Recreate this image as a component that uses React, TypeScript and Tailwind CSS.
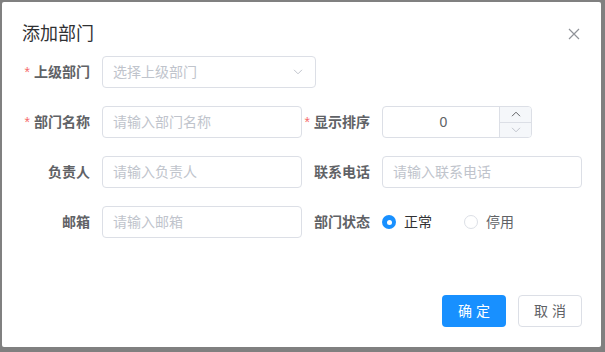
import React from "react";

const font = "font-['Liberation_Sans','Noto_Sans_CJK_SC',sans-serif]";

function Label({ text, required }: { text: string; required?: boolean }) {
  return (
    <label className="w-[80px] shrink-0 pr-[12px] flex items-center justify-end h-8 text-[14px] font-bold text-[#606266]">
      {required && <span className="text-[#f56c6c] font-normal mr-[4px]">*</span>}
      {text}
    </label>
  );
}

function TextInput({ placeholder }: { placeholder: string }) {
  return (
    <input
      placeholder={placeholder}
      className="w-full h-8 px-[10px] border border-[#dcdfe6] rounded-[4px] text-[14px] text-[#606266] placeholder:text-[#c0c4cc] outline-none bg-white"
    />
  );
}

function Chevron({ up, color }: { up?: boolean; color: string }) {
  return (
    <svg width="10" height="6" viewBox="0 0 10 6" fill="none" stroke={color} strokeWidth="1">
      {up ? <path d="M1 5.2 5 1.2l4 4" /> : <path d="M1 0.8l4 4 4-4" />}
    </svg>
  );
}

export default function App() {
  return (
    <div className={`w-[605px] h-[352px] bg-[#808080] pt-[2px] pl-[2px] ${font}`}>
      <div className="w-[599px] h-[345px] bg-white rounded-[2px] flex flex-col">
        {/* Header */}
        <div className="flex items-center justify-between pt-[20px] pb-[10px] pl-[20px] pr-[19px]">
          <span className="text-[18px] leading-[24px] text-[#303133]">添加部门</span>
          <button className="w-[14px] h-[14px] flex items-center justify-center mr-[1px]">
            <svg width="12" height="12" viewBox="0 0 12 12" stroke="#909399" strokeWidth="1.2">
              <path d="M1 1l10 10M11 1 1 11" />
            </svg>
          </button>
        </div>

        {/* Body */}
        <div className="px-[20px] pb-[30px] flex-1">
          <div className="flex mb-[18px]">
            <Label text="上级部门" required />
            <div className="w-[214px] h-8 pl-[10px] pr-[12px] border border-[#dcdfe6] rounded-[4px] flex items-center justify-between">
              <span className="text-[14px] text-[#c0c4cc]">选择上级部门</span>
              <Chevron color="#c0c4cc" />
            </div>
          </div>

          <div className="grid grid-cols-2 gap-y-[18px] w-[560px]">
            <div className="flex">
              <Label text="部门名称" required />
              <TextInput placeholder="请输入部门名称" />
            </div>
            <div className="flex">
              <Label text="显示排序" required />
              <div className="w-[150px] h-8 border border-[#dcdfe6] rounded-[4px] flex overflow-hidden">
                <div className="flex-1 flex items-center justify-center pl-[15px] pr-[10px] text-[14px] text-[#606266]">
                  0
                </div>
                <div className="w-[32px] border-l border-[#dcdfe6] bg-[#f5f7fa] flex flex-col">
                  <div className="flex-1 flex items-center justify-center border-b border-[#dcdfe6]">
                    <Chevron up color="#606266" />
                  </div>
                  <div className="flex-1 flex items-center justify-center">
                    <Chevron color="#c0c4cc" />
                  </div>
                </div>
              </div>
            </div>

            <div className="flex">
              <Label text="负责人" />
              <TextInput placeholder="请输入负责人" />
            </div>
            <div className="flex">
              <Label text="联系电话" />
              <TextInput placeholder="请输入联系电话" />
            </div>

            <div className="flex">
              <Label text="邮箱" />
              <TextInput placeholder="请输入邮箱" />
            </div>
            <div className="flex">
              <Label text="部门状态" />
              <div className="flex items-center h-8 text-[14px] text-[#303133]">
                <span className="flex items-center mr-[32px]">
                  <span className="w-[14px] h-[14px] rounded-full bg-[#1890ff] flex items-center justify-center">
                    <span className="w-[5px] h-[5px] rounded-full bg-white" />
                  </span>
                  <span className="ml-[8px]">正常</span>
                </span>
                <span className="flex items-center">
                  <span className="w-[14px] h-[14px] rounded-full border border-[#dcdfe6] bg-white" />
                  <span className="ml-[8px] text-[#606266]">停用</span>
                </span>
              </div>
            </div>
          </div>
        </div>

        {/* Footer */}
        <div className="flex justify-end gap-[12px] pt-[10px] pb-[20px] pr-[19px]">
          <button className="w-[64px] h-8 rounded-[4px] bg-[#1890ff] text-white text-[14px]">确 定</button>
          <button className="w-[64px] h-8 rounded-[4px] bg-white border border-[#dcdfe6] text-[#606266] text-[14px]">取 消</button>
        </div>
      </div>
    </div>
  );
}
